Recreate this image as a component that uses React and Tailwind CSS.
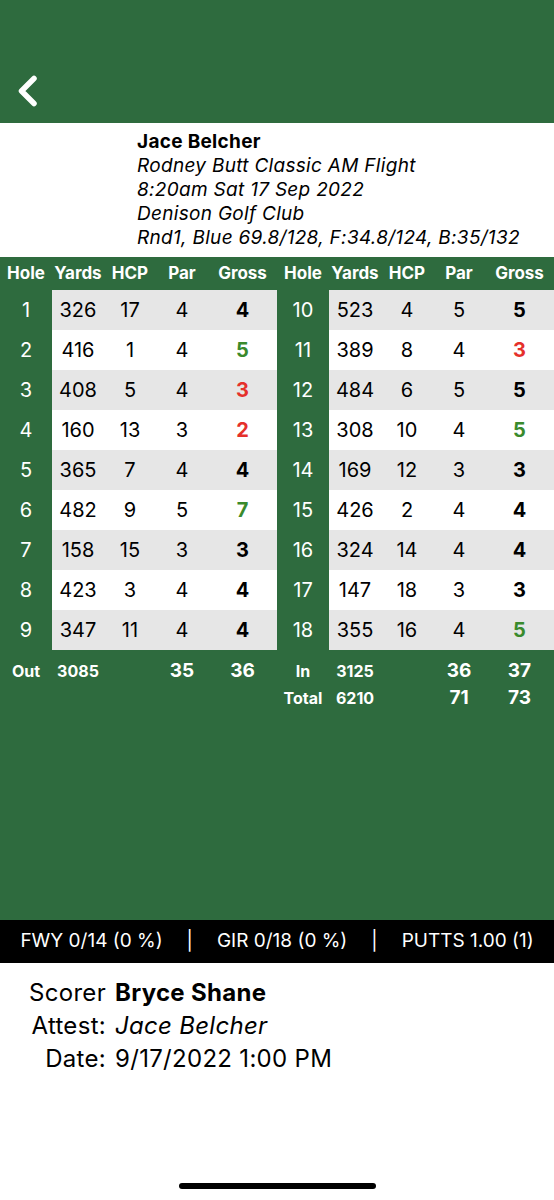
import React from "react";

const front = [
  [1, 326, 17, 4, 4],
  [2, 416, 1, 4, 5],
  [3, 408, 5, 4, 3],
  [4, 160, 13, 3, 2],
  [5, 365, 7, 4, 4],
  [6, 482, 9, 5, 7],
  [7, 158, 15, 3, 3],
  [8, 423, 3, 4, 4],
  [9, 347, 11, 4, 4],
];

const back = [
  [10, 523, 4, 5, 5],
  [11, 389, 8, 4, 3],
  [12, 484, 6, 5, 5],
  [13, 308, 10, 4, 5],
  [14, 169, 12, 3, 3],
  [15, 426, 2, 4, 4],
  [16, 324, 14, 4, 4],
  [17, 147, 18, 3, 3],
  [18, 355, 16, 4, 5],
];

const cols = "grid grid-cols-[52px_52px_52px_52px_69px_52px_52px_52px_52px_69px]";

const grossColor = (par, gross) => {
  if (gross > par) return "text-[#3a8a2c]";
  if (gross < par) return "text-[#e5302b]";
  return "text-black";
};

const Half = ({ hole, rowBg }) => {
  const [n, yards, hcp, par, gross] = hole;
  return (
    <>
      <div className="flex items-center justify-center bg-[#2e6b3e] text-white">{n}</div>
      <div className={`${rowBg} flex items-center justify-center`}>{yards}</div>
      <div className={`${rowBg} flex items-center justify-center`}>{hcp}</div>
      <div className={`${rowBg} flex items-center justify-center`}>{par}</div>
      <div className={`${rowBg} flex items-center justify-center font-bold ${grossColor(par, gross)}`}>{gross}</div>
    </>
  );
};

const Header = () => (
  <>
    <div className="text-center">Hole</div>
    <div className="text-center">Yards</div>
    <div className="text-center">HCP</div>
    <div className="text-center">Par</div>
    <div className="text-center">Gross</div>
  </>
);

export default function App() {
  return (
    <div className="w-[554px] h-[1200px] bg-white flex flex-col font-['Inter','Liberation_Sans',sans-serif] text-black">
      {/* top bar */}
      <div className="h-[123px] bg-[#2e6b3e] flex items-end pb-[16px] pl-[17px]">
        <svg width="22" height="32" viewBox="0 0 22 32" fill="none">
          <path d="M17 3.5 L4.5 16 L17 28.5" stroke="white" strokeWidth="5.5" strokeLinecap="round" strokeLinejoin="round" />
        </svg>
      </div>

      {/* round info */}
      <div className="h-[134px] pl-[137px] pt-[7px] text-[19px] leading-[24px] tracking-[0.3px]">
        <div className="font-bold">Jace Belcher</div>
        <div className="italic">Rodney Butt Classic AM Flight</div>
        <div className="italic">8:20am Sat 17 Sep 2022</div>
        <div className="italic">Denison Golf Club</div>
        <div className="italic">Rnd1, Blue 69.8/128, F:34.8/124, B:35/132</div>
      </div>

      {/* scorecard */}
      <div className="flex-1 bg-[#2e6b3e] flex flex-col">
        <div className={`${cols} h-[33px] items-center text-white font-bold text-[17px]`}>
          <Header />
          <Header />
        </div>

        {front.map((h, i) => (
          <div key={h[0]} className={`${cols} h-[40px] text-[20px]`}>
            <Half hole={h} rowBg={i % 2 === 0 ? "bg-[#e6e6e6]" : "bg-white"} />
            <Half hole={back[i]} rowBg={i % 2 === 0 ? "bg-[#e6e6e6]" : "bg-white"} />
          </div>
        ))}

        <div className="pt-[7px] text-white font-bold">
          <div className={`${cols} h-[27px] items-center`}>
            <div className="text-center text-[16px]">Out</div>
            <div className="text-center text-[16px]">3085</div>
            <div />
            <div className="text-center text-[19px]">35</div>
            <div className="text-center text-[19px]">36</div>
            <div className="text-center text-[16px]">In</div>
            <div className="text-center text-[16px]">3125</div>
            <div />
            <div className="text-center text-[19px]">36</div>
            <div className="text-center text-[19px]">37</div>
          </div>
          <div className={`${cols} h-[27px] items-center`}>
            <div />
            <div />
            <div />
            <div />
            <div />
            <div className="text-center text-[16px]">Total</div>
            <div className="text-center text-[16px]">6210</div>
            <div />
            <div className="text-center text-[19px]">71</div>
            <div className="text-center text-[19px]">73</div>
          </div>
        </div>
      </div>

      {/* stats bar */}
      <div className="h-[43px] bg-black text-white text-[19px] flex items-center justify-center gap-[24px]">
        <span>FWY 0/14 (0 %)</span>
        <span>|</span>
        <span>GIR 0/18 (0 %)</span>
        <span>|</span>
        <span>PUTTS 1.00 (1)</span>
      </div>

      {/* signatures */}
      <div className="h-[237px] flex flex-col">
        <div className="pt-[13px] grid grid-cols-[106px_1fr] gap-x-[9px] text-[24px] leading-[33px] tracking-[0.3px]">
          <div className="text-right">Scorer</div>
          <div className="font-bold">Bryce Shane</div>
          <div className="text-right">Attest:</div>
          <div className="italic">Jace Belcher</div>
          <div className="text-right">Date:</div>
          <div>9/17/2022 1:00 PM</div>
        </div>
        <div className="mt-auto mb-[11px] flex justify-center">
          <div className="w-[197px] h-[6px] rounded-full bg-black" />
        </div>
      </div>
    </div>
  );
}
